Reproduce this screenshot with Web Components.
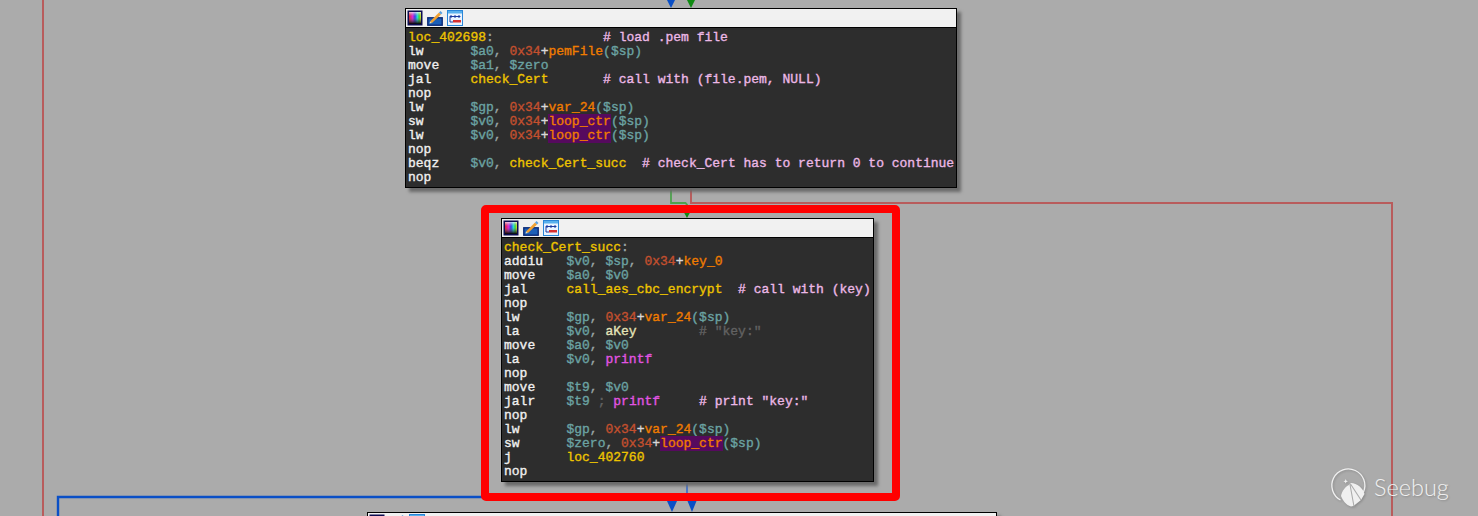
<!DOCTYPE html>
<html>
<head>
<meta charset="utf-8">
<title>IDA graph</title>
<style>
  html, body { margin: 0; background: #ababab; overflow: hidden; }
</style>
</head>
<body>
<graph-canvas>
  <seebug-mark></seebug-mark>

  <ida-node x="405" y="8" w="552">
<asm-line><asm-t k="label">loc_402698</asm-t><asm-t k="sep">:</asm-t>              <asm-t k="comment"># load .pem file</asm-t></asm-line>
<asm-line><asm-t k="op">lw</asm-t>      <asm-t k="reg">$a0</asm-t><asm-t k="sep">, </asm-t><asm-t k="num">0x34</asm-t><asm-t k="plus">+</asm-t><asm-t k="var">pemFile</asm-t><asm-t k="reg">($sp)</asm-t></asm-line>
<asm-line><asm-t k="op">move</asm-t>    <asm-t k="reg">$a1</asm-t><asm-t k="sep">, </asm-t><asm-t k="reg">$zero</asm-t></asm-line>
<asm-line><asm-t k="op">jal</asm-t>     <asm-t k="label">check_Cert</asm-t>       <asm-t k="comment"># call with (file.pem, NULL)</asm-t></asm-line>
<asm-line><asm-t k="op">nop</asm-t></asm-line>
<asm-line><asm-t k="op">lw</asm-t>      <asm-t k="reg">$gp</asm-t><asm-t k="sep">, </asm-t><asm-t k="num">0x34</asm-t><asm-t k="plus">+</asm-t><asm-t k="var">var_24</asm-t><asm-t k="reg">($sp)</asm-t></asm-line>
<asm-line><asm-t k="op">sw</asm-t>      <asm-t k="reg">$v0</asm-t><asm-t k="sep">, </asm-t><asm-t k="num">0x34</asm-t><asm-t k="plus">+</asm-t><asm-t k="hl">loop_ctr</asm-t><asm-t k="reg">($sp)</asm-t></asm-line>
<asm-line><asm-t k="op">lw</asm-t>      <asm-t k="reg">$v0</asm-t><asm-t k="sep">, </asm-t><asm-t k="num">0x34</asm-t><asm-t k="plus">+</asm-t><asm-t k="hl">loop_ctr</asm-t><asm-t k="reg">($sp)</asm-t></asm-line>
<asm-line><asm-t k="op">nop</asm-t></asm-line>
<asm-line><asm-t k="op">beqz</asm-t>    <asm-t k="reg">$v0</asm-t><asm-t k="sep">, </asm-t><asm-t k="label">check_Cert_succ</asm-t>  <asm-t k="comment"># check_Cert has to return 0 to continue</asm-t></asm-line>
<asm-line><asm-t k="op">nop</asm-t></asm-line>
  </ida-node>

  <ida-node x="501" y="218" w="373">
<asm-line><asm-t k="label">check_Cert_succ</asm-t><asm-t k="sep">:</asm-t></asm-line>
<asm-line><asm-t k="op">addiu</asm-t>   <asm-t k="reg">$v0</asm-t><asm-t k="sep">, </asm-t><asm-t k="reg">$sp</asm-t><asm-t k="sep">, </asm-t><asm-t k="num">0x34</asm-t><asm-t k="plus">+</asm-t><asm-t k="var">key_0</asm-t></asm-line>
<asm-line><asm-t k="op">move</asm-t>    <asm-t k="reg">$a0</asm-t><asm-t k="sep">, </asm-t><asm-t k="reg">$v0</asm-t></asm-line>
<asm-line><asm-t k="op">jal</asm-t>     <asm-t k="label">call_aes_cbc_encrypt</asm-t>  <asm-t k="comment"># call with (key)</asm-t></asm-line>
<asm-line><asm-t k="op">nop</asm-t></asm-line>
<asm-line><asm-t k="op">lw</asm-t>      <asm-t k="reg">$gp</asm-t><asm-t k="sep">, </asm-t><asm-t k="num">0x34</asm-t><asm-t k="plus">+</asm-t><asm-t k="var">var_24</asm-t><asm-t k="reg">($sp)</asm-t></asm-line>
<asm-line><asm-t k="op">la</asm-t>      <asm-t k="reg">$v0</asm-t><asm-t k="sep">, </asm-t><asm-t k="data">aKey</asm-t>        <asm-t k="dim"># "key:"</asm-t></asm-line>
<asm-line><asm-t k="op">move</asm-t>    <asm-t k="reg">$a0</asm-t><asm-t k="sep">, </asm-t><asm-t k="reg">$v0</asm-t></asm-line>
<asm-line><asm-t k="op">la</asm-t>      <asm-t k="reg">$v0</asm-t><asm-t k="sep">, </asm-t><asm-t k="func">printf</asm-t></asm-line>
<asm-line><asm-t k="op">nop</asm-t></asm-line>
<asm-line><asm-t k="op">move</asm-t>    <asm-t k="reg">$t9</asm-t><asm-t k="sep">, </asm-t><asm-t k="reg">$v0</asm-t></asm-line>
<asm-line><asm-t k="op">jalr</asm-t>    <asm-t k="reg">$t9</asm-t> <asm-t k="dim">;</asm-t> <asm-t k="func">printf</asm-t>     <asm-t k="comment"># print "key:"</asm-t></asm-line>
<asm-line><asm-t k="op">nop</asm-t></asm-line>
<asm-line><asm-t k="op">lw</asm-t>      <asm-t k="reg">$gp</asm-t><asm-t k="sep">, </asm-t><asm-t k="num">0x34</asm-t><asm-t k="plus">+</asm-t><asm-t k="var">var_24</asm-t><asm-t k="reg">($sp)</asm-t></asm-line>
<asm-line><asm-t k="op">sw</asm-t>      <asm-t k="reg">$zero</asm-t><asm-t k="sep">, </asm-t><asm-t k="num">0x34</asm-t><asm-t k="plus">+</asm-t><asm-t k="hl">loop_ctr</asm-t><asm-t k="reg">($sp)</asm-t></asm-line>
<asm-line><asm-t k="op">j</asm-t>       <asm-t k="label">loc_402760</asm-t></asm-line>
<asm-line><asm-t k="op">nop</asm-t></asm-line>
  </ida-node>

  <ida-node x="367" y="512" w="630"></ida-node>

  <red-frame></red-frame>
</graph-canvas>

<script>
// the free canvas, edges are drawn behind the nodes
var template_canvas = document.createElement("template");
template_canvas.innerHTML = `
<style>
  :host { display: block; position: relative; width: 1478px; height: 516px; overflow: hidden; background: #ababab; }
  svg { position: absolute; left: 0; top: 0; }
</style>
<svg width="1478" height="516" viewBox="0 0 1478 516" fill="none">
  <path d="M43 0V516" stroke="#b85c5c" stroke-width="2"/>
  <path d="M691 188V203H1392V516" stroke="#b85c5c" stroke-width="2"/>
  <path d="M671 188V203H685.500L687 204.500V213" stroke="#4ea24e" stroke-width="1.800"/>
  <path d="M58 516V497H482" stroke="#0a4fc6" stroke-width="2.400"/>
  <path d="M687 482V494" stroke="#4f76c4" stroke-width="2"/>
  <path d="M667 0H675L671 8Z" fill="#0a4fc6"/>
  <path d="M687 0H695L691 8Z" fill="#0f8a12"/>
  <path d="M684 212.500H690L687 218Z" fill="#0f8a12"/>
  <path d="M667 501H677L672 512Z" fill="#0a4fc6"/>
  <path d="M687.500 501H696.500L692 512Z" fill="#0a4fc6"/>
</svg>
<slot></slot>
`;
class GraphCanvas extends HTMLElement {
  constructor(){
    super();
    this.attachShadow({mode:"open"});
    this.shadowRoot.appendChild(template_canvas.content.cloneNode(true));
  }
}
customElements.define("graph-canvas", GraphCanvas);

// one basic block: title bar with the three icons, listing in the slot
var template_node = document.createElement("template");
template_node.innerHTML = `
<style>
  :host { display: block; position: absolute; box-sizing: border-box; border: 1px solid #000; background: #2d2d2d; box-shadow: 4px 4px 3px #6b6b6b; }
  .bar { display: flex; gap: 4px; align-items: center; height: 18px; padding-left: 1px; background: #f1f1f1; border-bottom: 1px solid #000; }
  .body { padding: 3px 0 2px 2px; }
  svg { display: block; }
</style>
<div class="bar">
  <svg width="16" height="16" viewBox="0 0 16 16">
    <defs>
      <linearGradient id="h" x1="0" x2="1" y1="0" y2="0">
        <stop offset="0" stop-color="#e8202c"/><stop offset=".3" stop-color="#e020e0"/><stop offset=".5" stop-color="#3040f0"/><stop offset=".7" stop-color="#20e0e0"/><stop offset=".85" stop-color="#30e030"/><stop offset="1" stop-color="#f0e020"/>
      </linearGradient>
      <linearGradient id="v" x1="0" x2="0" y1="0" y2="1">
        <stop offset="0" stop-color="#fff" stop-opacity=".75"/><stop offset=".4" stop-color="#888" stop-opacity="0"/><stop offset="1" stop-color="#000"/>
      </linearGradient>
    </defs>
    <rect x=".5" y=".5" width="15" height="15" fill="#0c0c50"/>
    <rect x="2" y="2" width="12" height="12" fill="url(#h)"/>
    <rect x="2" y="2" width="12" height="12" fill="url(#v)"/>
  </svg>
  <svg width="16" height="16" viewBox="0 0 16 16">
    <rect x=".8" y="7.800" width="14.400" height="7.400" fill="#1c5fb8" stroke="#0a2a78" stroke-width="1.400"/>
    <path d="M3 11.500L12 2.500L14 4.500L5 13Z" fill="#f0a030"/>
    <path d="M3 11.500L5 13L2.500 13.500Z" fill="#f4e0b0"/>
    <path d="M12 2.500L13.500 1L15.500 3L14 4.500Z" fill="#5aa0e0"/>
  </svg>
  <svg width="16" height="16" viewBox="0 0 16 16">
    <rect x=".5" y=".5" width="15" height="15" fill="#eaf4ff" stroke="#2a86d8"/>
    <path d="M1 1H15V3.500H1Z" fill="#58b0ec"/>
    <path d="M3 6.500H13M4.500 5L3 6.500L4.500 8M8 5V8M11.500 5L13 6.500L11.500 8" stroke="#1a3aa0" stroke-width="1" fill="none"/>
    <path d="M3 7V12H6" stroke="#1a3aa0" stroke-width="1" fill="none"/>
    <rect x="6" y="10" width="8" height="2.500" fill="#d83030"/>
  </svg>
</div>
<div class="body"><slot></slot></div>
`;
class IdaNode extends HTMLElement {
  constructor(){
    super();
    this.attachShadow({mode:"open"});
    this.shadowRoot.appendChild(template_node.content.cloneNode(true));
  }
  connectedCallback(){
    this.style.left = this.getAttribute("x") + "px";
    this.style.top = this.getAttribute("y") + "px";
    this.style.width = this.getAttribute("w") + "px";
  }
}
customElements.define("ida-node", IdaNode);

// one row of the listing. white-space is pre here so no newlines in this template
var template_line = document.createElement("template");
template_line.innerHTML = `<style>
  :host { display: block; height: 14px; font: 13px/14px "Liberation Mono", "Courier New", monospace; white-space: pre; color: #e6e6e6; -webkit-text-stroke: .35px; }
</style><slot></slot>`;
class AsmLine extends HTMLElement {
  constructor(){
    super();
    this.attachShadow({mode:"open"});
    this.shadowRoot.appendChild(template_line.content.cloneNode(true));
  }
}
customElements.define("asm-line", AsmLine);

// a coloured token in a row, same rule about newlines
var template_tok = document.createElement("template");
template_tok.innerHTML = `<style>
  :host { display: inline; }
  :host([k=op]) { color: #f0f0f0; }
  :host([k=label]) { color: #eec400; }
  :host([k=reg]) { color: #6ba3a3; }
  :host([k=sep]) { color: #9aa6a6; }
  :host([k=plus]) { color: #d8d8d8; }
  :host([k=num]) { color: #c4502e; }
  :host([k=var]) { color: #f07c00; }
  :host([k=hl]) { color: #f07c00; background: #560a5e; }
  :host([k=comment]) { color: #ecb8e6; }
  :host([k=func]) { color: #e254e2; }
  :host([k=data]) { color: #e4e4b8; }
  :host([k=dim]) { color: #626262; }
</style><slot></slot>`;
class AsmT extends HTMLElement {
  constructor(){
    super();
    this.attachShadow({mode:"open"});
    this.shadowRoot.appendChild(template_tok.content.cloneNode(true));
  }
}
customElements.define("asm-t", AsmT);

// the red marker somebody drew round the block
var template_frame = document.createElement("template");
template_frame.innerHTML = `
<style>
  :host { display: block; position: absolute; left: 481px; top: 205px; width: 419px; height: 296px; box-sizing: border-box; border: 8px solid #ff0000; border-radius: 5px; pointer-events: none; }
</style>
`;
class RedFrame extends HTMLElement {
  constructor(){
    super();
    this.attachShadow({mode:"open"});
    this.shadowRoot.appendChild(template_frame.content.cloneNode(true));
  }
}
customElements.define("red-frame", RedFrame);

// watermark, bottom right
var template_mark = document.createElement("template");
template_mark.innerHTML = `
<style>
  :host { display: flex; position: absolute; left: 1331px; top: 470px; align-items: center; gap: 9px; height: 36px; color: #f0f0f0; }
  span { font: 300 23.500px/36px Lato, "Open Sans", sans-serif; text-shadow: 1px 1px 2px rgba(0,0,0,.2); margin-top: -3px; }
  svg { display: block; overflow: visible; filter: drop-shadow(1px 1px 1px rgba(0,0,0,.2)); }
</style>
<svg width="34" height="36" viewBox="0 0 34 36" fill="none">
  <path d="M9.500 30A16.500 16.500 0 1 1 32.500 22" stroke="#f0f0f0" stroke-width="1.300"/>
  <path d="M20 13C26 13 32 18 33.500 24L30 30L22.500 36L20 36.500C15 35 12 31 10 26C11 21 14 17 18 15Z" fill="#f0f0f0"/>
  <path d="M19 14.500L23 36.500M19.500 14L30 30" stroke="#ababab" stroke-width="1.100"/>
  <path d="M14.700 9L15.400 10.700L17 11.300L15.400 12L14.700 13.600L14 12L12.400 11.300L14 10.700Z" fill="#f0f0f0"/>
</svg>
<span>Seebug</span>
`;
class SeebugMark extends HTMLElement {
  constructor(){
    super();
    this.attachShadow({mode:"open"});
    this.shadowRoot.appendChild(template_mark.content.cloneNode(true));
  }
}
customElements.define("seebug-mark", SeebugMark);
</script>
</body>
</html>
